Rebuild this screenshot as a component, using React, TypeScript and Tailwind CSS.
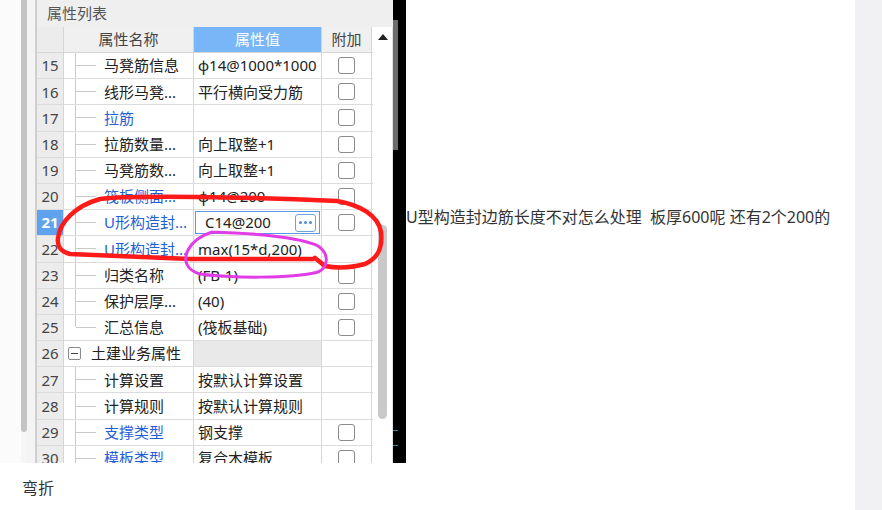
import React from 'react'

type Row = {
  n: number
  name: string
  value?: string
  blue?: boolean
  check?: boolean
  group?: boolean
  selected?: boolean
}

const rows: Row[] = [
  { n: 15, name: '马凳筋信息', value: 'ф14@1000*1000', check: true },
  { n: 16, name: '线形马凳...', value: '平行横向受力筋', check: true },
  { n: 17, name: '拉筋', blue: true, check: true },
  { n: 18, name: '拉筋数量...', value: '向上取整+1', check: true },
  { n: 19, name: '马凳筋数...', value: '向上取整+1', check: true },
  { n: 20, name: '筏板侧面...', blue: true, value: 'ф14@200', check: true },
  { n: 21, name: 'U形构造封...', blue: true, value: 'C14@200', check: true, selected: true },
  { n: 22, name: 'U形构造封...', blue: true, value: 'max(15*d,200)' },
  { n: 23, name: '归类名称', value: '(FB-1)', check: true },
  { n: 24, name: '保护层厚...', value: '(40)', check: true },
  { n: 25, name: '汇总信息', value: '(筏板基础)', check: true },
  { n: 26, name: '土建业务属性', group: true },
  { n: 27, name: '计算设置', value: '按默认计算设置' },
  { n: 28, name: '计算规则', value: '按默认计算规则' },
  { n: 29, name: '支撑类型', blue: true, value: '钢支撑', check: true },
  { n: 30, name: '模板类型', blue: true, value: '复合木模板', check: true },
]

function Checkbox() {
  return <div className="w-[17px] h-[17px] rounded-[3px] border border-[#8a8a8a] bg-white" />
}

function NameCell({ row }: { row: Row }) {
  if (row.group) {
    return (
      <div className="w-[130px] shrink-0 border-r border-[#d6d6d6] flex items-center pl-[4px]">
        <div className="w-[13px] h-[13px] border border-[#8a8a8a] rounded-[2px] flex items-center justify-center">
          <div className="w-[7px] h-px bg-[#444]" />
        </div>
        <span className="ml-[10px] text-[#222]">{row.name}</span>
      </div>
    )
  }
  const last = row.n === 25
  return (
    <div className="w-[130px] shrink-0 border-r border-[#d6d6d6] flex items-stretch pl-[11px]">
      <div className="w-px flex flex-col">
        <div className="flex-1 bg-[#c9c9c9]" />
        <div className={last ? 'flex-1' : 'flex-1 bg-[#c9c9c9]'} />
      </div>
      <div className="w-[20px] h-px bg-[#c9c9c9] self-center" />
      <span className={`ml-[8px] self-center whitespace-nowrap ${row.blue ? 'text-[#1f5fd8]' : 'text-[#222]'}`}>
        {row.name}
      </span>
    </div>
  )
}

function ValueCell({ row }: { row: Row }) {
  if (row.selected) {
    return (
      <div className="w-[128px] shrink-0 border-r border-[#d6d6d6] p-[1px]">
        <div className="h-full border border-[#5b9ae0] bg-white flex items-center pl-[9px] pr-[3px]">
          <span className="flex-1 text-[#222]">{row.value}</span>
          <div className="w-[21px] h-[18px] rounded-[3px] border border-[#6aa3e2] flex items-center justify-center gap-[2px]">
            <div className="w-[3px] h-[3px] rounded-full bg-[#4a8ad8]" />
            <div className="w-[3px] h-[3px] rounded-full bg-[#4a8ad8]" />
            <div className="w-[3px] h-[3px] rounded-full bg-[#4a8ad8]" />
          </div>
        </div>
      </div>
    )
  }
  return (
    <div
      className={`w-[128px] shrink-0 border-r border-[#d6d6d6] flex items-center pl-[4px] overflow-hidden whitespace-nowrap text-[#222] ${
        row.group ? 'bg-[#e9e9e9]' : ''
      }`}
    >
      {row.value}
    </div>
  )
}

function PropertyPanel() {
  return (
    <div className="w-[357px] h-full flex flex-col bg-[#efefef] border-l border-[#cfcfcf]">
      <div className="h-[27px] shrink-0 flex items-center pl-[10px] text-[#555] text-[15px]">属性列表</div>
      <div className="flex-1 flex bg-white overflow-hidden">
        <div className="w-[336px] shrink-0 flex flex-col text-[15px]">
          <div className="h-[26px] shrink-0 flex border-b border-[#d6d6d6]">
            <div className="w-[27px] shrink-0 bg-[#ececec] border-r border-[#d6d6d6]" />
            <div className="w-[130px] shrink-0 bg-[#f0f0f0] border-r border-[#d6d6d6] flex items-center justify-center text-[#444]">
              属性名称
            </div>
            <div className="w-[128px] shrink-0 bg-[#78b6f7] border-r border-[#d6d6d6] flex items-center justify-center text-white">
              属性值
            </div>
            <div className="w-[50px] shrink-0 bg-[#f0f0f0] border-r border-[#d6d6d6] flex items-center justify-center text-[#444]">
              附加
            </div>
          </div>
          {rows.map((row) => (
            <div key={row.n} className="h-[26.2px] shrink-0 flex border-b border-[#dcdcdc]">
              <div
                className={`w-[27px] shrink-0 border-r border-[#d6d6d6] flex items-center justify-center text-[15px] ${
                  row.selected ? 'bg-[#5fa2ee] text-white font-bold' : 'bg-[#ececec] text-[#444]'
                }`}
              >
                {row.n}
              </div>
              <NameCell row={row} />
              <ValueCell row={row} />
              <div className="w-[50px] shrink-0 border-r border-[#d6d6d6] flex items-center justify-center">
                {row.check && <Checkbox />}
              </div>
            </div>
          ))}
        </div>
        <div className="flex-1 flex flex-col items-center border-r border-[#e2e2e2]">
          <div className="mt-[7px] w-0 h-0 border-l-[5px] border-r-[5px] border-b-[6px] border-l-transparent border-r-transparent border-b-[#222]" />
          <div className="mt-[185px] w-[9px] h-[194px] rounded-full bg-[#c9c9c9]" />
        </div>
      </div>
    </div>
  )
}

function Screenshot() {
  return (
    <div className="relative w-[406px] h-[463px] shrink-0 flex overflow-hidden">
      <div className="w-[21px] shrink-0 bg-[#fbfbfb]" />
      <div className="w-[6px] shrink-0 flex flex-col bg-[#f6f6f6]">
        <div className="h-[432px] rounded-b-full bg-[#c4c4c4]" />
      </div>
      <div className="w-[9px] shrink-0 bg-[#f4f4f4] border-r border-[#d0d0d0]" />
      <PropertyPanel />
      <div className="w-[13px] shrink-0 flex bg-black">
        <div className="w-[5px] flex flex-col">
          <div className="mt-[20px] h-[130px] bg-[#6c6c6c]" />
          <div className="mt-[280px] h-px bg-[#2a8aa0]" />
          <div className="mt-[14px] h-px bg-[#2a8aa0]" />
        </div>
      </div>
      <svg className="absolute inset-0 pointer-events-none" width="406" height="463" viewBox="0 0 406 463">
        <path
          d="M 313 259 L 190 259 L 70 254 C 60 252, 57 245, 58 238 C 60 222, 75 206, 100 199 C 130 195, 250 197, 337 201 C 360 205, 378 215, 381 232 C 383 248, 378 258, 365 264 C 350 268, 335 268, 325 266 L 315 258"
          fill="none"
          stroke="#ff1a1a"
          strokeWidth="4.5"
          strokeLinecap="round"
          strokeLinejoin="round"
        />
        <path
          d="M 212 232 C 250 233, 300 237, 318 246 C 330 254, 328 268, 318 272 C 290 279, 230 278, 200 274 C 186 270, 183 260, 188 250 C 192 242, 200 236, 212 232"
          fill="none"
          stroke="#e23ce6"
          strokeWidth="3"
          strokeLinecap="round"
        />
      </svg>
    </div>
  )
}

export default function App() {
  return (
    <div className="w-[882px] h-[510px] flex bg-white font-['Noto_Sans','Noto_Sans_CJK_SC',sans-serif] overflow-hidden">
      <div className="flex-1 flex flex-col">
        <div className="flex">
          <Screenshot />
          <div className="pt-[205px] text-[16px] leading-[24px] text-[#333] whitespace-pre">
            U型构造封边筋长度不对怎么处理  板厚600呢 还有2个200的
          </div>
        </div>
        <div className="mt-[13px] pl-[22px] text-[16px] leading-[24px] text-[#333]">弯折</div>
      </div>
      <div className="w-[27px] shrink-0 bg-[#f1f1f3]" />
    </div>
  )
}
